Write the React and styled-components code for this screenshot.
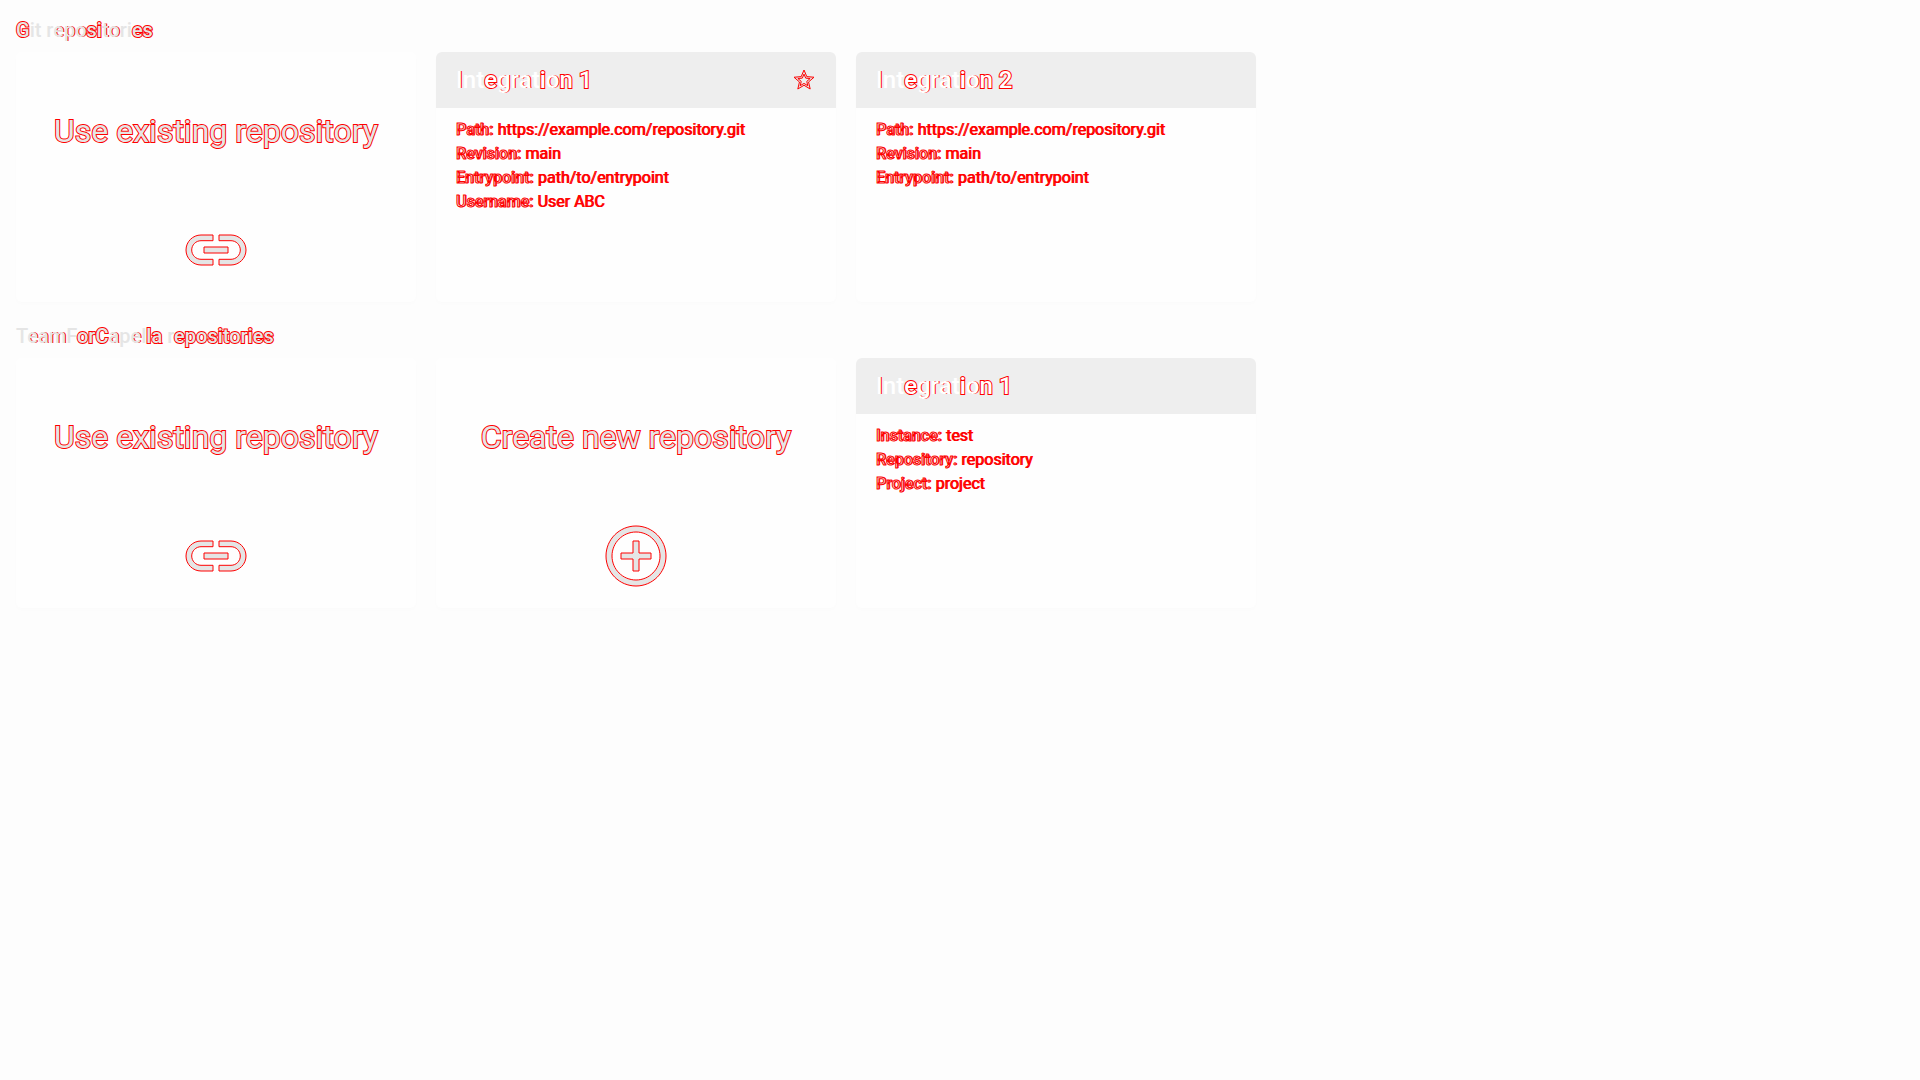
import React from "react";
import styled, { createGlobalStyle, css } from "styled-components";

const RED = "#ff0000";
const GREY = "#e5e5e5";

const GlobalStyle = createGlobalStyle`
  *, *::before, *::after { box-sizing: border-box; }
  body {
    margin: 0;
    background: #fdfdfd;
    font-family: Roboto, "Liberation Sans", sans-serif;
    color: ${GREY};
  }
`;

const outlined = css`
  -webkit-text-stroke: 2px ${RED};
  paint-order: stroke fill;
`;

const edged = css`
  text-shadow: 1px 0 ${RED};
`;

const Page = styled.main`
  display: flex;
  flex-direction: column;
  gap: 20px;
  padding: 16px;
`;

const Section = styled.section`
  display: flex;
  flex-direction: column;
  gap: 8px;
`;

const Heading = styled.h2`
  margin: 0;
  font-size: 20px;
  line-height: 28px;
  font-weight: 500;
`;

const CardRow = styled.div`
  display: flex;
  flex-wrap: wrap;
  gap: 20px;
`;

const Card = styled.article`
  width: 400px;
  min-height: 250px;
  border-radius: 6px;
  overflow: hidden;
  background: #fefefe;
  box-shadow: 0 2px 4px rgba(0, 0, 0, 0.01);
`;

const ActionCard = styled(Card).attrs({ as: "a" })`
  display: flex;
  flex-direction: column;
  align-items: center;
  padding-bottom: 16px;
  text-decoration: none;
  color: ${GREY};
`;

const ActionTitle = styled.span`
  flex: 1;
  display: flex;
  align-items: center;
  padding-bottom: 4px;
  font-size: 32px;
  line-height: 40px;
  ${outlined}
`;

const CardHeader = styled.header`
  display: flex;
  align-items: center;
  justify-content: space-between;
  height: 56px;
  padding: 0 20px;
  background: #eeeeee;
  color: #ffffff;
`;

const CardTitle = styled.h3`
  margin: 0;
  font-size: 24px;
  line-height: 32px;
  font-weight: 500;
`;

const Run = styled.span`
  ${(p) => p.$tone === "edge" && edged}
  ${(p) => p.$tone === "outline" && outlined}
`;

const Details = styled.div`
  padding: 10px 20px;
  font-size: 16px;
  line-height: 24px;
`;

const Detail = styled.p`
  margin: 0;
  color: ${RED};
  text-shadow: 1px 0 ${RED};
`;

const Label = styled.b`
  font-weight: 500;
  color: ${GREY};
  -webkit-text-stroke: 1px ${RED};
`;

const Icon = styled.svg`
  display: block;
  width: ${(p) => p.$size}px;
  height: ${(p) => p.$size}px;
  fill: ${GREY};
  stroke: ${RED};
  stroke-width: ${(p) => 24 / p.$size};
`;

const PATHS = {
  link: "M3.9 12c0-1.71 1.39-3.1 3.1-3.1h4V7H7c-2.76 0-5 2.24-5 5s2.24 5 5 5h4v-1.9H7c-1.71 0-3.1-1.39-3.1-3.1zM8 13h8v-2H8v2zm9-6h-4v1.9h4c1.71 0 3.1 1.39 3.1 3.1s-1.39 3.1-3.1 3.1h-4V17h4c2.76 0 5-2.24 5-5s-2.24-5-5-5z",
  add: "M13 7h-2v4H7v2h4v4h2v-4h4v-2h-4V7zm-1-5C6.48 2 2 6.48 2 12s4.48 10 10 10 10-4.48 10-10S17.52 2 12 2zm0 18c-4.41 0-8-3.59-8-8s3.59-8 8-8 8 3.59 8 8-3.59 8-8 8z",
  star: "M22 9.24l-7.19-.62L12 2 9.19 8.63 2 9.24l5.46 4.73L5.82 21 12 17.27 18.18 21l-1.63-7.03L22 9.24zM12 15.4l-3.76 2.27 1-4.28-3.32-2.88 4.38-.38L12 6.1l1.71 4.04 4.38.38-3.32 2.88 1 4.28L12 15.4z",
};

function Glyph({ name, size }) {
  return (
    <Icon $size={size} viewBox="0 0 24 24" aria-hidden="true">
      <path d={PATHS[name]} />
    </Icon>
  );
}

function Runs({ parts }) {
  return parts.map(([text, tone], i) => (
    <Run key={i} $tone={tone}>{text}</Run>
  ));
}

function Action({ title, icon }) {
  return (
    <ActionCard href="#">
      <ActionTitle>{title}</ActionTitle>
      <Glyph name={icon} size={72} />
    </ActionCard>
  );
}

function Integration({ number, primary, details }) {
  return (
    <Card>
      <CardHeader>
        <CardTitle>
          <Runs
            parts={[
              ["I", "edge"],
              ["nt", "plain"],
              ["e", "outline"],
              ["gra", "edge"],
              ["t", "plain"],
              ["i", "outline"],
              ["o", "edge"],
              ["n " + number, "outline"],
            ]}
          />
        </CardTitle>
        {primary && <Glyph name="star" size={24} />}
      </CardHeader>
      <Details>
        {details.map(([label, value]) => (
          <Detail key={label}>
            <Label>{label}:</Label> {value}
          </Detail>
        ))}
      </Details>
    </Card>
  );
}

const gitDetails = [
  ["Path", "https://example.com/repository.git"],
  ["Revision", "main"],
  ["Entrypoint", "path/to/entrypoint"],
];

export default function App() {
  return (
    <>
      <GlobalStyle />
      <Page>
        <Section>
          <Heading>
            <Runs
              parts={[
                ["G", "outline"],
                ["it r", "plain"],
                ["epo", "edge"],
                ["si", "outline"],
                ["to", "edge"],
                ["ri", "plain"],
                ["es", "outline"],
              ]}
            />
          </Heading>
          <CardRow>
            <Action title="Use existing repository" icon="link" />
            <Integration number="1" primary details={[...gitDetails, ["Username", "User ABC"]]} />
            <Integration number="2" details={gitDetails} />
          </CardRow>
        </Section>
        <Section>
          <Heading>
            <Runs
              parts={[
                ["T", "plain"],
                ["eam", "edge"],
                ["F", "plain"],
                ["orC", "outline"],
                ["a", "edge"],
                ["p", "plain"],
                ["e", "edge"],
                ["l", "plain"],
                ["la", "outline"],
                [" r", "plain"],
                ["epositories", "outline"],
              ]}
            />
          </Heading>
          <CardRow>
            <Action title="Use existing repository" icon="link" />
            <Action title="Create new repository" icon="add" />
            <Integration
              number="1"
              details={[
                ["Instance", "test"],
                ["Repository", "repository"],
                ["Project", "project"],
              ]}
            />
          </CardRow>
        </Section>
      </Page>
    </>
  );
}
